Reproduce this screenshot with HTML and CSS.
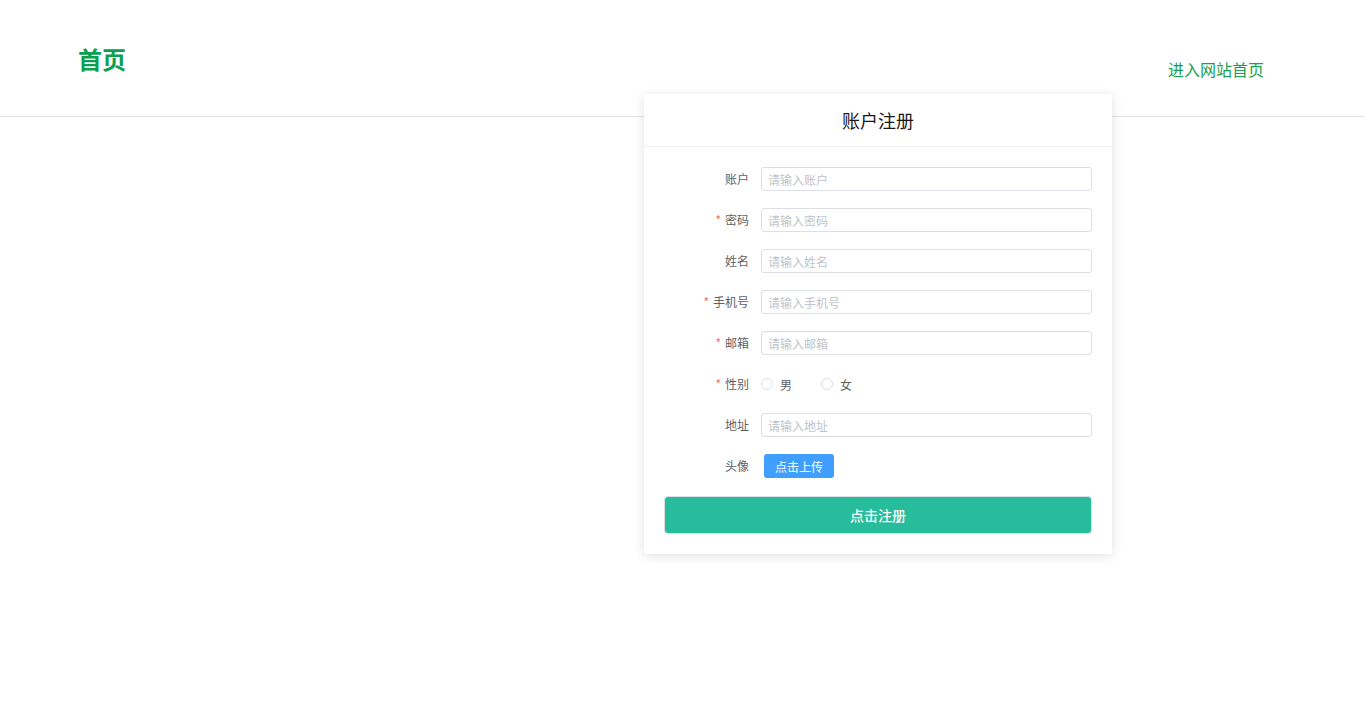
FILE: index.html
```html
<!DOCTYPE html>
<html lang="zh">
<head>
<meta charset="utf-8">
<title>账户注册</title>
<link rel="stylesheet" href="styles.css">
</head>
<body>
<header class="top">
  <h1 class="brand">首页</h1>
  <a class="home-link" href="#">进入网站首页</a>
</header>

<section class="card">
  <div class="card-head">账户注册</div>
  <form class="card-body">
    <div class="row">
      <label class="lbl">账户</label>
      <input class="inp" type="text" placeholder="请输入账户">
    </div>
    <div class="row">
      <label class="lbl"><span class="req">*</span>密码</label>
      <input class="inp" type="password" placeholder="请输入密码">
    </div>
    <div class="row">
      <label class="lbl">姓名</label>
      <input class="inp" type="text" placeholder="请输入姓名">
    </div>
    <div class="row">
      <label class="lbl"><span class="req">*</span>手机号</label>
      <input class="inp" type="text" placeholder="请输入手机号">
    </div>
    <div class="row">
      <label class="lbl"><span class="req">*</span>邮箱</label>
      <input class="inp" type="text" placeholder="请输入邮箱">
    </div>
    <div class="row">
      <label class="lbl"><span class="req">*</span>性别</label>
      <div class="radios">
        <span class="radio"><span class="dot"></span><span class="rtext">男</span></span>
        <span class="radio"><span class="dot"></span><span class="rtext">女</span></span>
      </div>
    </div>
    <div class="row">
      <label class="lbl">地址</label>
      <input class="inp" type="text" placeholder="请输入地址">
    </div>
    <div class="row">
      <label class="lbl">头像</label>
      <button type="button" class="upload">点击上传</button>
    </div>
    <button type="button" class="submit">点击注册</button>
  </form>
</section>
</body>
</html>
```

FILE: styles.css
```css
* { box-sizing: border-box; }
html, body { margin: 0; padding: 0; background: #fff; }
body {
  font-family: "Noto Sans CJK SC", "Noto Sans", "Liberation Sans", sans-serif;
  color: #303133;
  position: relative;
  min-height: 718px;
}
.top {
  height: 117px;
  border-bottom: 1px solid #e4e4e4;
  display: flex;
  justify-content: space-between;
  align-items: flex-start;
  padding: 0 101px 0 78px;
}
.brand {
  margin: 44px 0 0;
  font-size: 24px;
  line-height: 30px;
  font-weight: bold;
  color: #0c9f4f;
}
.home-link {
  margin-top: 57px;
  font-size: 16px;
  line-height: 24px;
  color: #17a04f;
  text-decoration: none;
}
.card {
  position: absolute;
  left: 644px;
  top: 94px;
  width: 468px;
  background: #fff;
  border-radius: 2px;
  box-shadow: 0 2px 12px 0 rgba(0, 0, 0, 0.12);
}
.card-head {
  height: 53px;
  line-height: 52px;
  text-align: center;
  font-size: 18px;
  color: #1a1a1a;
  border-bottom: 1px solid #f0f0f0;
}
.card-body {
  padding: 20px 20px 20px;
  display: flex;
  flex-direction: column;
  gap: 17px;
}
.row {
  display: flex;
  align-items: center;
  height: 24px;
}
.lbl {
  width: 97px;
  padding-right: 12px;
  text-align: right;
  font-size: 12px;
  line-height: 24px;
  color: #606266;
}
.req { color: #f56c6c; margin-right: 4px; }
.inp {
  flex: 1;
  height: 24px;
  border: 1px solid #dcdfe6;
  border-radius: 3px;
  padding: 0 6px;
  font-family: inherit;
  font-size: 12px;
  color: #606266;
  outline: none;
}
.inp::placeholder { color: #c0c4cc; }
.radios { display: flex; align-items: center; }
.radio { display: flex; align-items: center; margin-right: 29px; }
.dot {
  width: 12px;
  height: 12px;
  border: 1px solid #dcdfe6;
  border-radius: 50%;
  background: #fff;
}
.rtext { padding-left: 7px; font-size: 12px; color: #606266; }
.upload {
  margin-left: 3px;
  width: 70px;
  height: 24px;
  border: none;
  border-radius: 3px;
  background: #409eff;
  color: #fff;
  font-family: inherit;
  font-size: 12px;
  padding: 0;
}
.submit {
  margin-top: 1px;
  height: 38px;
  border: 1px solid #dcdfe6;
  border-radius: 4px;
  background: #27bc9b;
  color: #fff;
  font-family: inherit;
  font-size: 14px;
  font-weight: 500;
  padding: 0;
}
```
